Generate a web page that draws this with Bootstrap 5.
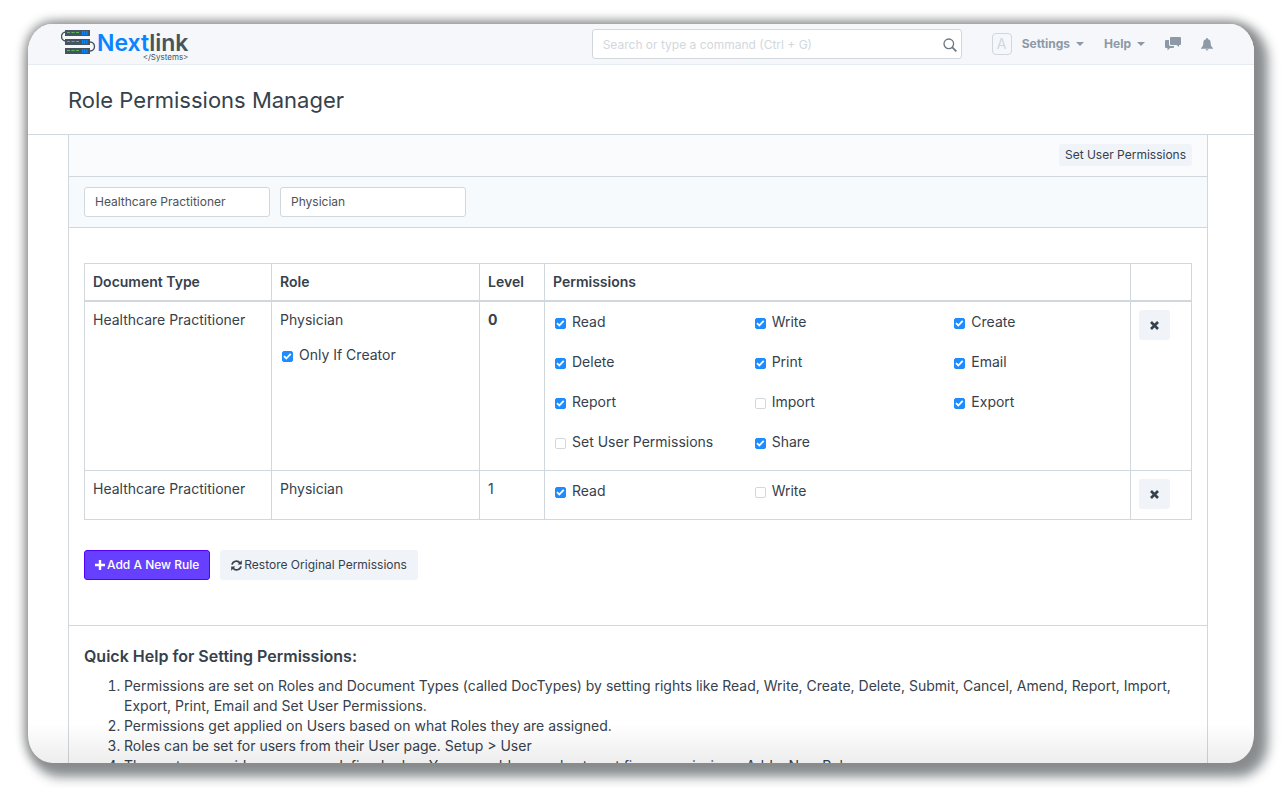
<!DOCTYPE html>
<html lang="en">
<head>
<meta charset="utf-8">
<meta name="viewport" content="width=device-width, initial-scale=1">
<title>Role Permissions Manager</title>
<link rel="stylesheet" href="https://cdn.jsdelivr.net/npm/bootstrap@5.3.0/dist/css/bootstrap.min.css">
<style>
:root { --line: #d1d8dd; --ink: #36414c; --muted: #8d99a6; --soft-btn: #f0f3f8; }
body { font-family: Inter, "Liberation Sans", sans-serif; font-size: 14px; line-height: 20px; color: var(--ink); background: #fff; }
.stage { padding: 24px 29px 25px 28px; }
.window { border-radius: 24px / 28px; background: #fff; box-shadow: 0 0 12px 2px #888, 8px 8px 12px 6px #8b9094; }
.topbar { height: 41px; background: #f5f7fa; border-bottom: 1px solid #e4ebf1; padding: 0 41px 0 33px; }
.brand { color: #46545f; text-decoration: none; padding-top: 4px; }
.brand-text { padding-top: 5px; }
.brand-name { font-size: 23px; line-height: 20px; font-weight: 600; }
.brand-name b { font-weight: 600; color: #0a84ff; }
.brand-sub { font-size: 8px; line-height: 8px; }
.search { width: 370px; margin-right: 30px; }
.search .form-control { height: 30px; font-size: 12px; line-height: 18px; padding: 5px 10px; border: 1px solid var(--line); border-radius: 3px; }
.search .form-control::placeholder { color: #d1d8dd; opacity: 1; }
.search svg { position: absolute; right: 5px; top: 9px; }
.avatar-letter { width: 20px; height: 22px; border: 1px solid var(--line); border-radius: 4px; color: #d1d8dd; line-height: 20px; margin-right: 10px; }
.menus { gap: 20px; }
.menu-link { color: var(--muted); font-size: 12px; font-weight: 700; text-decoration: none; background: none; border: 0; padding: 0; display: flex; align-items: center; }
.menu-link.dropdown-toggle::after { border-width: 4px 4px 0; margin-left: 6px; }
.title-bar { height: 70px; padding: 0 40px; border-bottom: 1px solid var(--line); }
.title-bar h1 { font-size: 22px; line-height: 30px; font-weight: 400; }
.page-area { padding: 0 46px 0 40px; }
.sheet { border: solid var(--line); border-width: 0 1px; }
.actions-row { padding: 9px 15px 10px; background: #fafbfc; border-bottom: 1px solid var(--line); }
.filter-row { padding: 10px 15px; gap: 10px; background: #f7fafc; border-bottom: 1px solid var(--line); }
.filter-row .form-control { width: 186px; height: 30px; font-size: 12px; line-height: 18px; padding: 4px 10px 6px; border: 1px solid var(--line); border-radius: 3px; color: #4c5258; }
.btn-soft { background: var(--soft-btn); color: var(--ink); border: 0; border-radius: 3px; font-size: 12px; line-height: 18px; padding: 6px 11px; }
.btn-tiny { padding: 2px 6px; }
.btn-add { background: #6740ff; color: #fff; border: 1px solid #5200ff; border-radius: 3px; font-size: 12px; line-height: 18px; padding: 5px 10px; font-weight: 500; }
.btn-add, .btn-restore { display: flex; align-items: center; gap: 2px; }
.btn-remove { width: 31px; height: 30px; padding: 0; display: flex; align-items: center; justify-content: center; }
.rules-block { padding: 35px 15px 45px; border-bottom: 1px solid var(--line); }
.rules { table-layout: fixed; margin-bottom: 30px; border-color: var(--line); }
.rules > :not(caption) > * > * { padding: 8px; color: var(--ink); border: 1px solid var(--line); }
.rules > thead > tr > th { font-weight: 600; border-bottom-width: 2px; }
.col-type { width: 187px; } .col-role { width: 208px; } .col-level { width: 65px; } .col-remove { width: 61px; }
.tick { display: flex; align-items: center; gap: 6px; }
.tick input { appearance: none; flex: none; width: 11px; height: 11px; margin: 2px 0 0; border: 1px solid var(--line); border-radius: 2px; background: #fff; }
.tick input:checked { border-color: #1e8cff; background: #1e8cff url("data:image/svg+xml,%3Csvg xmlns='http://www.w3.org/2000/svg' viewBox='0 0 11 11'%3E%3Cpath d='M2 5.2 4.3 7.5 8.7 2.8' fill='none' stroke='white' stroke-width='1.8'/%3E%3C/svg%3E") center / 11px 11px; }
.creator { padding: 15px 0 0 2px; }
.perm-grid { display: grid; grid-template-columns: repeat(3, 1fr); row-gap: 20px; padding: 2px 0 10px 2px; margin-right: -32px; }
.button-row { gap: 10px; }
.help-block { padding: 20px 15px 0; }
.help-block h2 { font-size: 16px; line-height: 20px; font-weight: 600; margin-bottom: 10px; }
.help-block ol { padding-left: 40px; padding-right: 10px; }
.help-block a { color: inherit; text-decoration: none; }
.fade-out { position: absolute; left: 0; right: 0; bottom: 0; height: 40px; background: linear-gradient(transparent, rgba(0,0,0,.07)); pointer-events: none; }
</style>
</head>
<body>
<div class="stage vh-100">
<div class="window h-100 overflow-hidden position-relative">
  <nav class="topbar d-flex align-items-center">
    <a href="#" class="brand d-flex align-items-start align-self-start me-auto">
      <svg width="36" height="32" viewBox="0 0 36 32" aria-hidden="true">
        <path d="M5 4C-1 4-1 13 5 13M29 14c6 0 6 9 0 9" fill="none" stroke="#46545f" stroke-width="1.4"/>
        <path d="M4 2h25v6H4zM4 11h25v6H4zM4 20h25v6H4z" fill="#46545f"/>
        <path d="M6 4.500h12M6 13.500h12M6 22.500h12" stroke="#5cb85c" stroke-width="1.200" stroke-dasharray="3 1.500"/>
        <path d="M21 5h6M21 14h6M21 23h6" stroke="#0a84ff" stroke-width="4" stroke-dasharray="1.300 .8"/>
      </svg>
      <span class="brand-text d-flex flex-column align-items-end"><span class="brand-name"><b>Next</b>link</span><span class="brand-sub">&lt;/Systems&gt;</span></span>
    </a>
    <form class="search position-relative" role="search">
      <input type="search" class="form-control" aria-label="Search" placeholder="Search or type a command (Ctrl + G)">
      <svg width="14" height="14" viewBox="0 0 14 14" fill="none" stroke="#6c7680" aria-hidden="true"><circle cx="5.800" cy="5.800" r="4.800" stroke-width="1.300"/><path d="m9.300 9.300 4 4" stroke-width="1.800"/></svg>
    </form>
    <span class="avatar-letter text-center">A</span>
    <div class="menus d-flex align-items-center">
      <button type="button" class="menu-link dropdown-toggle" data-bs-toggle="dropdown">Settings</button>
      <button type="button" class="menu-link dropdown-toggle" data-bs-toggle="dropdown">Help</button>
      <a href="#" class="menu-link" aria-label="Chat"><svg width="16" height="14" viewBox="0 0 16 14" fill="#8d99a6"><path d="M6 0h9q1 0 1 1v6q0 1-1 1h-1v2l-2.500-2H6Q5 8 5 7V1q0-1 1-1z"/><path d="M1 3h3v4.500Q4 9 5.500 9H9v1q0 1-1 1H5l-2.500 2.500V11H1q-1 0-1-1V4q0-1 1-1z"/></svg></a>
      <a href="#" class="menu-link" aria-label="Notifications"><svg width="12" height="13" viewBox="0 0 12 13" fill="#8d99a6"><path d="M6 0q1 0 1 1.200C9 1.700 9.700 3 9.700 5c0 2.500.8 4 2.300 5v.8H0V10c1.500-1 2.300-2.500 2.300-5 0-2 .7-3.300 2.700-3.800Q5 0 6 0zM4.500 11.200h3q-.3 1.300-1.500 1.300t-1.500-1.300z"/></svg></a>
    </div>
  </nav>
  <header class="title-bar d-flex align-items-center"><h1 class="m-0">Role Permissions Manager</h1></header>
  <main class="page-area"><div class="sheet">
    <div class="actions-row d-flex justify-content-end"><button type="button" class="btn btn-soft btn-tiny">Set User Permissions</button></div>
    <div class="filter-row d-flex">
      <input type="text" class="form-control" aria-label="Document type" value="Healthcare Practitioner">
      <input type="text" class="form-control" aria-label="Role" value="Physician">
    </div>
    <div class="rules-block">
      <table class="table rules">
        <thead><tr><th class="col-type">Document Type</th><th class="col-role">Role</th><th class="col-level">Level</th><th>Permissions</th><th class="col-remove"></th></tr></thead>
        <tbody>
          <tr>
            <td>Healthcare Practitioner</td>
            <td>Physician<label class="tick creator"><input type="checkbox" checked>Only If Creator</label></td>
            <td class="fw-bold">0</td>
            <td><div class="perm-grid">
              <label class="tick"><input type="checkbox" checked>Read</label>
              <label class="tick"><input type="checkbox" checked>Write</label>
              <label class="tick"><input type="checkbox" checked>Create</label>
              <label class="tick"><input type="checkbox" checked>Delete</label>
              <label class="tick"><input type="checkbox" checked>Print</label>
              <label class="tick"><input type="checkbox" checked>Email</label>
              <label class="tick"><input type="checkbox" checked>Report</label>
              <label class="tick"><input type="checkbox">Import</label>
              <label class="tick"><input type="checkbox" checked>Export</label>
              <label class="tick"><input type="checkbox">Set User Permissions</label>
              <label class="tick"><input type="checkbox" checked>Share</label>
            </div></td>
            <td><button type="button" class="btn btn-soft btn-remove" aria-label="Remove rule"><svg width="9" height="9" viewBox="0 0 9 9" stroke="#36414c" stroke-width="2.700"><path d="m1 1 7 7M8 1 1 8"/></svg></button></td>
          </tr>
          <tr>
            <td>Healthcare Practitioner</td>
            <td>Physician</td>
            <td>1</td>
            <td><div class="perm-grid">
              <label class="tick"><input type="checkbox" checked>Read</label>
              <label class="tick"><input type="checkbox">Write</label>
            </div></td>
            <td><button type="button" class="btn btn-soft btn-remove" aria-label="Remove rule"><svg width="9" height="9" viewBox="0 0 9 9" stroke="#36414c" stroke-width="2.700"><path d="m1 1 7 7M8 1 1 8"/></svg></button></td>
          </tr>
        </tbody>
      </table>
      <div class="button-row d-flex">
        <button type="button" class="btn btn-add"><svg width="10" height="10" viewBox="0 0 10 10" stroke="#fff" stroke-width="2.400" aria-hidden="true"><path d="M5 0v10M0 5h10"/></svg>Add A New Rule</button>
        <button type="button" class="btn btn-soft btn-restore"><svg width="11" height="11" viewBox="0 0 11 11" fill="none" stroke="#36414c" stroke-width="1.700" aria-hidden="true"><path d="M1 4.600A4.500 4.500 0 0 1 9 3M10 6.400A4.500 4.500 0 0 1 2 8"/><path d="M10.800.3v4.200H6.600zM.2 10.700V6.500h4.200z" fill="#36414c" stroke="none"/></svg>Restore Original Permissions</button>
      </div>
    </div>
    <section class="help-block">
      <h2>Quick Help for Setting Permissions:</h2>
      <ol>
        <li>Permissions are set on Roles and Document Types (called DocTypes) by setting rights like Read, Write, Create, Delete, Submit, Cancel, Amend, Report, Import, Export, Print, Email and Set User Permissions.</li>
        <li>Permissions get applied on Users based on what Roles they are assigned.</li>
        <li>Roles can be set for users from their User page. <a href="#">Setup &gt; User</a></li>
        <li>The system provides many pre-defined roles. You can add new roles to set finer permissions. <a href="#">Add a New Role</a>.</li>
      </ol>
    </section>
  </div></main>
  <div class="fade-out"></div>
</div>
</div>
<script src="https://cdn.jsdelivr.net/npm/bootstrap@5.3.0/dist/js/bootstrap.bundle.min.js"></script>
</body>
</html>
